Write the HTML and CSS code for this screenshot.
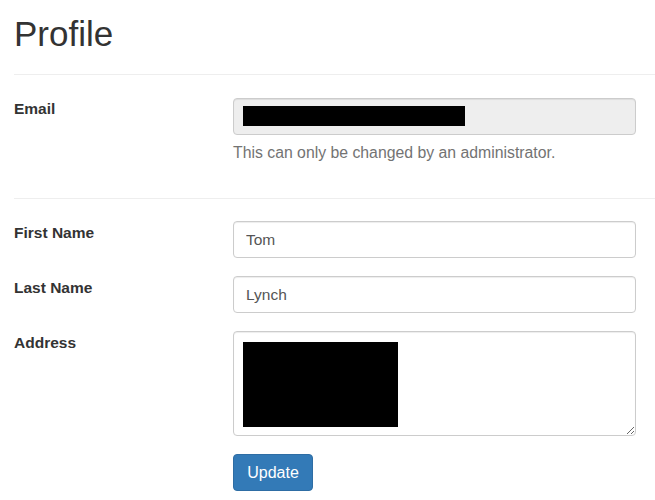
FILE: index.html
```html
<!DOCTYPE html>
<html>
<head>
<meta charset="utf-8">
<title>Profile</title>
<link rel="stylesheet" href="styles.css">
</head>
<body>
<div class="page">
  <h1 class="title">Profile</h1>
  <hr class="rule">
  <div class="form-row email-row">
    <label class="label" for="email">Email</label>
    <div class="control">
      <div class="field-wrap">
        <input id="email" class="input readonly" type="text" readonly value="">
        <div class="redact redact-email"></div>
      </div>
      <p class="help">This can only be changed by an administrator.</p>
    </div>
  </div>
  <hr class="rule rule-2">
  <div class="form-row">
    <label class="label" for="first">First Name</label>
    <div class="control"><input id="first" class="input" type="text" value="Tom"></div>
  </div>
  <div class="form-row">
    <label class="label" for="last">Last Name</label>
    <div class="control"><input id="last" class="input" type="text" value="Lynch"></div>
  </div>
  <div class="form-row">
    <label class="label" for="address">Address</label>
    <div class="control">
      <div class="field-wrap">
        <textarea id="address" class="input textarea"></textarea>
        <div class="redact redact-address"></div>
      </div>
    </div>
  </div>
  <div class="form-row">
    <div></div>
    <div class="control"><button class="btn" type="button">Update</button></div>
  </div>
</div>
</body>
</html>
```

FILE: styles.css
```css
html, body {
  margin: 0;
  padding: 0;
  background: #fff;
  overflow: hidden;
}
body {
  font-family: "Liberation Sans", Arial, sans-serif;
  font-size: 15.5px;
  line-height: 22px;
  color: #333;
}
.page {
  padding-left: 14px;
}
.title {
  margin: 15px 0 0;
  font-size: 35px;
  line-height: 38px;
  font-weight: normal;
  color: #333;
}
.rule {
  border: 0;
  border-top: 1px solid #eee;
  height: 0;
  margin: 21px 0 23px 0;
}
.rule-2 {
  margin: 0 0 22px 0;
}
.form-row {
  display: grid;
  grid-template-columns: 219px 403px;
  margin-bottom: 18px;
}
.email-row {
  margin-bottom: 34px;
}
.label {
  font-weight: bold;
  color: #333;
  line-height: 22px;
  padding-top: 1px;
}
.email-row .label {
  padding-top: 0;
}
.control {
  display: flex;
  flex-direction: column;
  align-items: flex-start;
}
.field-wrap {
  position: relative;
  width: 100%;
}
.input {
  box-sizing: border-box;
  display: block;
  width: 100%;
  height: 37px;
  margin: 0;
  padding: 0 12px;
  border: 1px solid #ccc;
  border-radius: 4px;
  background: #fff;
  font-family: "Liberation Sans", Arial, sans-serif;
  font-size: 15.5px;
  color: #555;
  box-shadow: inset 0 1px 1px rgba(0,0,0,0.075);
  outline: none;
}
.readonly {
  background: #eee;
}
.textarea {
  height: 105px;
  padding: 8px 12px;
  resize: both;
}
.redact {
  position: absolute;
  background: #000;
}
.redact-email {
  left: 10px;
  top: 8px;
  width: 222px;
  height: 20px;
}
.redact-address {
  left: 10px;
  top: 11px;
  width: 155px;
  height: 85px;
}
.help {
  margin: 7px 0 0;
  color: #737373;
  font-size: 15.8px;
  line-height: 22px;
}
.btn {
  box-sizing: border-box;
  width: 80px;
  height: 37px;
  padding: 0;
  border: 1px solid #2e6da4;
  border-radius: 4px;
  background: #337ab7;
  color: #fff;
  font-family: "Liberation Sans", Arial, sans-serif;
  font-size: 16px;
  cursor: pointer;
}
```
